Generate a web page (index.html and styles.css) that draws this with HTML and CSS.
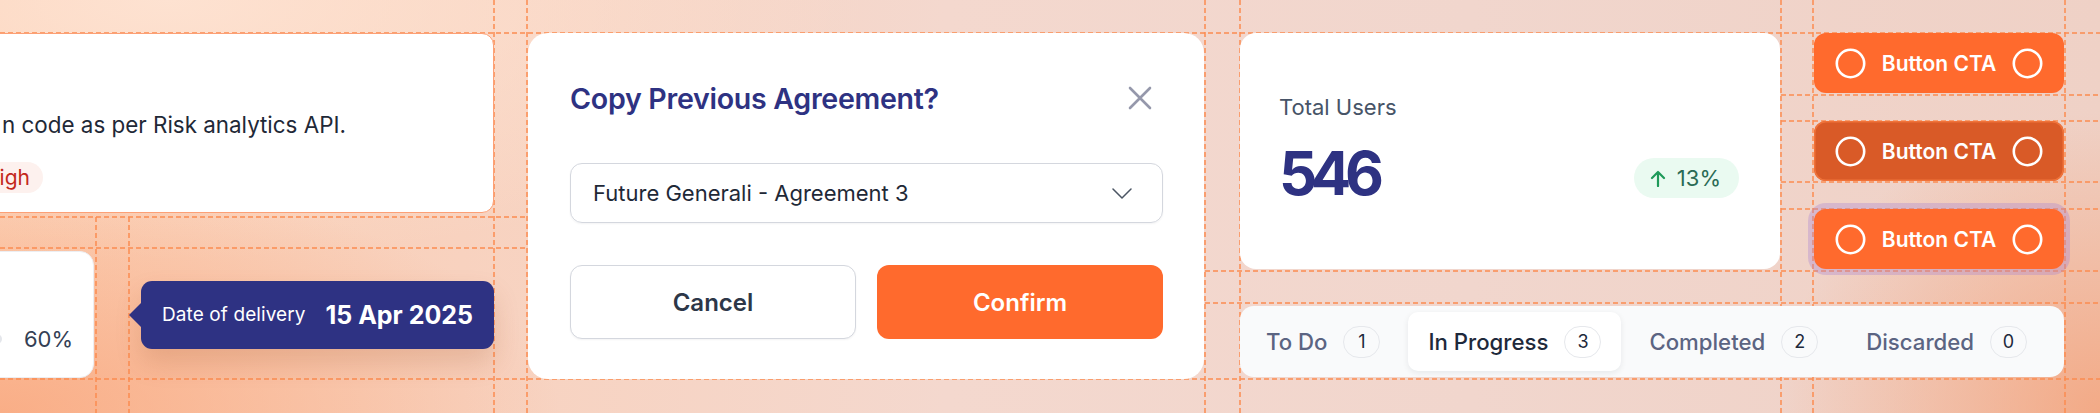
FILE: index.html
```html
<!DOCTYPE html>
<html lang="en">
<head>
<meta charset="utf-8">
<title>Components</title>
<link rel="stylesheet" href="styles.css">
</head>
<body>
<div class="canvas">
  <svg class="guides" width="2100" height="413" viewBox="0 0 2100 413" aria-hidden="true">
    <g stroke="#fb8c50" stroke-width="1.5" stroke-dasharray="5 3" fill="none">
      <line x1="0" y1="33" x2="2100" y2="33"/>
      <line x1="0" y1="379" x2="2100" y2="379"/>
      <line x1="0" y1="217" x2="527" y2="217"/>
      <line x1="0" y1="248" x2="527" y2="248"/>
      <line x1="1205" y1="271" x2="2100" y2="271"/>
      <line x1="1205" y1="303" x2="2100" y2="303"/>
      <line x1="1781" y1="95" x2="2100" y2="95"/>
      <line x1="1781" y1="121" x2="2100" y2="121"/>
      <line x1="1781" y1="182" x2="2100" y2="182"/>
      <line x1="1781" y1="209" x2="2100" y2="209"/>
      <line x1="96" y1="217" x2="96" y2="413"/>
      <line x1="129" y1="217" x2="129" y2="413"/>
      <line x1="494" y1="0" x2="494" y2="413"/>
      <line x1="527" y1="0" x2="527" y2="413"/>
      <line x1="1205" y1="0" x2="1205" y2="413"/>
      <line x1="1240" y1="0" x2="1240" y2="413"/>
      <line x1="1781" y1="0" x2="1781" y2="413"/>
      <line x1="1813" y1="0" x2="1813" y2="413"/>
      <line x1="2065" y1="0" x2="2065" y2="413"/>
    </g>
  </svg>

  <div class="stage">
    <div class="col-left">
      <div class="task-card">
        <p class="task-text">n code as per Risk analytics API.</p>
        <span class="priority">High</span>
      </div>
      <div class="left-bottom">
        <div class="progress-card">
          <div class="progress-row">
            <span class="track"></span>
            <span class="pct">60%</span>
          </div>
        </div>
        <div class="tooltip">
          <span class="tip-label">Date of delivery</span>
          <span class="tip-value">15 Apr 2025</span>
        </div>
      </div>
    </div>

    <div class="modal">
      <div class="modal-head">
        <h2 class="modal-title">Copy Previous Agreement?</h2>
        <svg class="close" width="24" height="24" viewBox="0 0 24 24" aria-hidden="true">
          <path d="M2 2L22 22M22 2L2 22" stroke="#9598ab" stroke-width="2.6" stroke-linecap="round"/>
        </svg>
      </div>
      <div class="select">
        <span>Future Generali - Agreement 3</span>
        <svg width="20" height="11" viewBox="0 0 20 11" aria-hidden="true">
          <path d="M1 1L10 10L19 1" stroke="#4b5563" stroke-width="1.5" fill="none" stroke-linecap="round" stroke-linejoin="round"/>
        </svg>
      </div>
      <div class="modal-actions">
        <button class="btn btn-cancel">Cancel</button>
        <button class="btn btn-confirm">Confirm</button>
      </div>
    </div>

    <div class="col-right">
      <div class="right-top">
        <div class="stat-card">
          <div class="stat-label">Total Users</div>
          <div class="stat-row">
            <div class="stat-value">546</div>
            <div class="trend">
              <svg width="16" height="17" viewBox="0 0 16 17" aria-hidden="true">
                <path d="M8 16V2M2 8L8 2L14 8" stroke="#1f9a5a" stroke-width="2.2" fill="none" stroke-linecap="round" stroke-linejoin="round"/>
              </svg>
              <span>13%</span>
            </div>
          </div>
        </div>
        <div class="cta-stack">
          <button class="cta">
            <svg class="ring" width="31" height="31" viewBox="0 0 31 31" aria-hidden="true"><circle cx="15.5" cy="15.5" r="13.7" stroke="#fff" stroke-width="2.6" fill="none"/></svg>
            <span>Button CTA</span>
            <svg class="ring" width="31" height="31" viewBox="0 0 31 31" aria-hidden="true"><circle cx="15.5" cy="15.5" r="13.7" stroke="#fff" stroke-width="2.6" fill="none"/></svg>
          </button>
          <button class="cta cta-pressed">
            <svg class="ring" width="31" height="31" viewBox="0 0 31 31" aria-hidden="true"><circle cx="15.5" cy="15.5" r="13.7" stroke="#fff" stroke-width="2.6" fill="none"/></svg>
            <span>Button CTA</span>
            <svg class="ring" width="31" height="31" viewBox="0 0 31 31" aria-hidden="true"><circle cx="15.5" cy="15.5" r="13.7" stroke="#fff" stroke-width="2.6" fill="none"/></svg>
          </button>
          <button class="cta cta-focus">
            <svg class="ring" width="31" height="31" viewBox="0 0 31 31" aria-hidden="true"><circle cx="15.5" cy="15.5" r="13.7" stroke="#fff" stroke-width="2.6" fill="none"/></svg>
            <span>Button CTA</span>
            <svg class="ring" width="31" height="31" viewBox="0 0 31 31" aria-hidden="true"><circle cx="15.5" cy="15.5" r="13.7" stroke="#fff" stroke-width="2.6" fill="none"/></svg>
          </button>
        </div>
      </div>
      <div class="tabs">
        <div class="tab"><span>To Do</span><span class="count">1</span></div>
        <div class="tab tab-active"><span>In Progress</span><span class="count">3</span></div>
        <div class="tab"><span>Completed</span><span class="count">2</span></div>
        <div class="tab"><span>Discarded</span><span class="count">0</span></div>
      </div>
    </div>
  </div>
</div>
</body>
</html>
```

FILE: styles.css
```css
* { box-sizing: border-box; }

html, body {
  margin: 0;
  padding: 0;
}

body {
  width: 2100px;
  height: 413px;
  overflow: hidden;
  font-family: Inter, "Noto Sans", sans-serif;
  color: #1f2937;
}

.canvas {
  position: relative;
  width: 2100px;
  height: 413px;
  overflow: hidden;
  background:
    radial-gradient(ellipse 560px 240px at 0% 100%, rgba(249, 166, 124, 0.8), rgba(249, 166, 124, 0) 100%),
    radial-gradient(ellipse 320px 300px at 100% 100%, rgba(244, 160, 118, 0.8), rgba(244, 160, 118, 0) 100%),
    radial-gradient(ellipse 700px 260px at 8% 0%, rgba(254, 228, 212, 0.9), rgba(254, 228, 212, 0) 100%),
    linear-gradient(90deg, #fbcdb1 0%, #f8d2bf 22%, #f4d8ce 45%, #f1d6cd 70%, #efd1c6 100%);
}

.guides {
  position: absolute;
  left: 0;
  top: 0;
}

.stage {
  position: relative;
  display: flex;
  align-items: flex-start;
  padding-top: 33px;
  margin-left: -24px;
}

/* ---------- left column ---------- */
.col-left {
  width: 518px;
  flex: none;
}

.task-card {
  height: 180px;
  background: #fff;
  border: 1.5px solid #fca076;
  border-radius: 12px;
  padding: 0 24px 19px 25px;
  display: flex;
  flex-direction: column;
  justify-content: flex-end;
  align-items: flex-start;
}

.task-text {
  margin: 0;
  font-size: 22.4px;
  line-height: 30px;
  color: #1f2937;
}

.priority {
  margin-top: 22px;
  margin-left: -31px;
  height: 31px;
  padding: 0 13px;
  border-radius: 16px;
  background: #fdf1ee;
  color: #c3281c;
  font-size: 21px;
  line-height: 31px;
}

.left-bottom {
  display: flex;
  align-items: center;
  margin-top: 38px;
  height: 127px;
}

.progress-card {
  width: 118px;
  height: 127px;
  flex: none;
  background: #fff;
  border: 1.5px solid #eceef2;
  border-radius: 14px;
  display: flex;
  flex-direction: column;
  justify-content: flex-end;
  padding: 0 20px 23px 0;
}

.progress-row {
  display: flex;
  align-items: center;
  gap: 22px;
  height: 30px;
}

.track {
  width: 33px;
  height: 10px;
  border-radius: 5px;
  background: #e4e6eb;
}

.pct {
  font-size: 22px;
  color: #344054;
}

.tooltip {
  position: relative;
  margin-left: 47px;
  width: 353px;
  height: 68px;
  flex: none;
  background: #2e3283;
  border-radius: 11px;
  padding: 0 21px;
  display: flex;
  align-items: center;
  justify-content: space-between;
  color: #fff;
  box-shadow: 0 14px 26px rgba(150, 70, 30, 0.18);
}

.tooltip::before {
  content: "";
  position: absolute;
  left: -12px;
  top: 22px;
  border-style: solid;
  border-width: 12px 12px 12px 0;
  border-color: transparent #2e3283 transparent transparent;
}

.tip-label {
  font-size: 19px;
  letter-spacing: 0.1px;
}

.tip-value {
  font-size: 25px;
  font-weight: 700;
}

/* ---------- modal ---------- */
.modal {
  margin-left: 34px;
  width: 676px;
  height: 346px;
  flex: none;
  background: #fff;
  border-radius: 20px;
  padding: 47px 41px 40px 42px;
  display: flex;
  flex-direction: column;
}

.modal-head {
  height: 36px;
  display: flex;
  align-items: center;
  justify-content: space-between;
}

.modal-title {
  margin: 0;
  font-size: 28.6px;
  font-weight: 600;
  color: #2e3282;
  letter-spacing: -0.3px;
}

.close {
  margin-right: 11px;
}

.select {
  margin-top: 47px;
  height: 60px;
  border: 1.5px solid #d4d7de;
  border-radius: 12px;
  padding: 0 30px 0 22px;
  display: flex;
  align-items: center;
  justify-content: space-between;
  font-size: 22px;
  color: #1f2937;
  box-shadow: 0 1px 2px rgba(16, 24, 40, 0.05);
}

.modal-actions {
  margin-top: 42px;
  display: grid;
  grid-template-columns: 1fr 1fr;
  gap: 21px;
}

.btn {
  height: 74px;
  border-radius: 12px;
  font-family: inherit;
  font-size: 24px;
  font-weight: 600;
}

.btn-cancel {
  background: #fff;
  border: 1.5px solid #d4d7de;
  color: #2d3748;
  box-shadow: 0 1px 2px rgba(16, 24, 40, 0.05);
}

.btn-confirm {
  background: #ff6a2d;
  border: none;
  color: #fff;
}

/* ---------- right column ---------- */
.col-right {
  margin-left: 36px;
  flex: none;
}

.right-top {
  display: flex;
  gap: 34px;
  align-items: flex-start;
}

.stat-card {
  width: 540px;
  height: 236px;
  background: #fff;
  border-radius: 16px;
  padding: 60px 41px 0 39px;
  display: flex;
  flex-direction: column;
}

.stat-label {
  font-size: 22px;
  line-height: 28px;
  color: #475467;
}

.stat-row {
  margin-top: 22px;
  height: 60px;
  display: flex;
  justify-content: space-between;
  align-items: flex-end;
}

.stat-value {
  font-size: 60px;
  line-height: 60px;
  font-weight: 700;
  color: #2e3282;
  letter-spacing: -6.5px;
}

.trend {
  margin-bottom: 5px;
  height: 40px;
  padding: 0 18px 0 16px;
  border-radius: 20px;
  background: #eafaf1;
  display: flex;
  align-items: center;
  gap: 11px;
  font-size: 22px;
  color: #2b6b55;
}

.cta-stack {
  width: 250px;
  display: flex;
  flex-direction: column;
  gap: 28px;
}

.cta {
  height: 60px;
  border: none;
  border-radius: 12px;
  background: #ff6a2d;
  color: #fff;
  padding: 0 21px;
  display: flex;
  align-items: center;
  justify-content: space-between;
  font-family: inherit;
  font-size: 21px;
  font-weight: 600;
}

.cta-pressed {
  background: #d95a27;
  box-shadow: inset 0 0 0 1.5px #f0733a;
}

.cta-focus {
  box-shadow: 0 0 0 6px rgba(168, 132, 208, 0.35);
}

.tabs {
  margin-top: 37px;
  width: 824px;
  height: 71px;
  background: #f9fafb;
  border-radius: 14px;
  padding: 6px;
  display: flex;
  gap: 8px;
}

.tab {
  height: 59px;
  padding: 0 20px;
  border-radius: 10px;
  display: flex;
  align-items: center;
  gap: 16px;
  font-size: 22.2px;
  font-weight: 500;
  color: #5b6482;
}

.tab-active {
  background: #fff;
  color: #1e293b;
  box-shadow: 0 2px 6px rgba(16, 24, 40, 0.08);
}

.count {
  min-width: 37px;
  height: 32px;
  padding: 0 11px;
  border: 1.5px solid #e6e8ec;
  border-radius: 16px;
  display: flex;
  align-items: center;
  justify-content: center;
  font-size: 18px;
  font-weight: 400;
  color: #1e293b;
}
```
